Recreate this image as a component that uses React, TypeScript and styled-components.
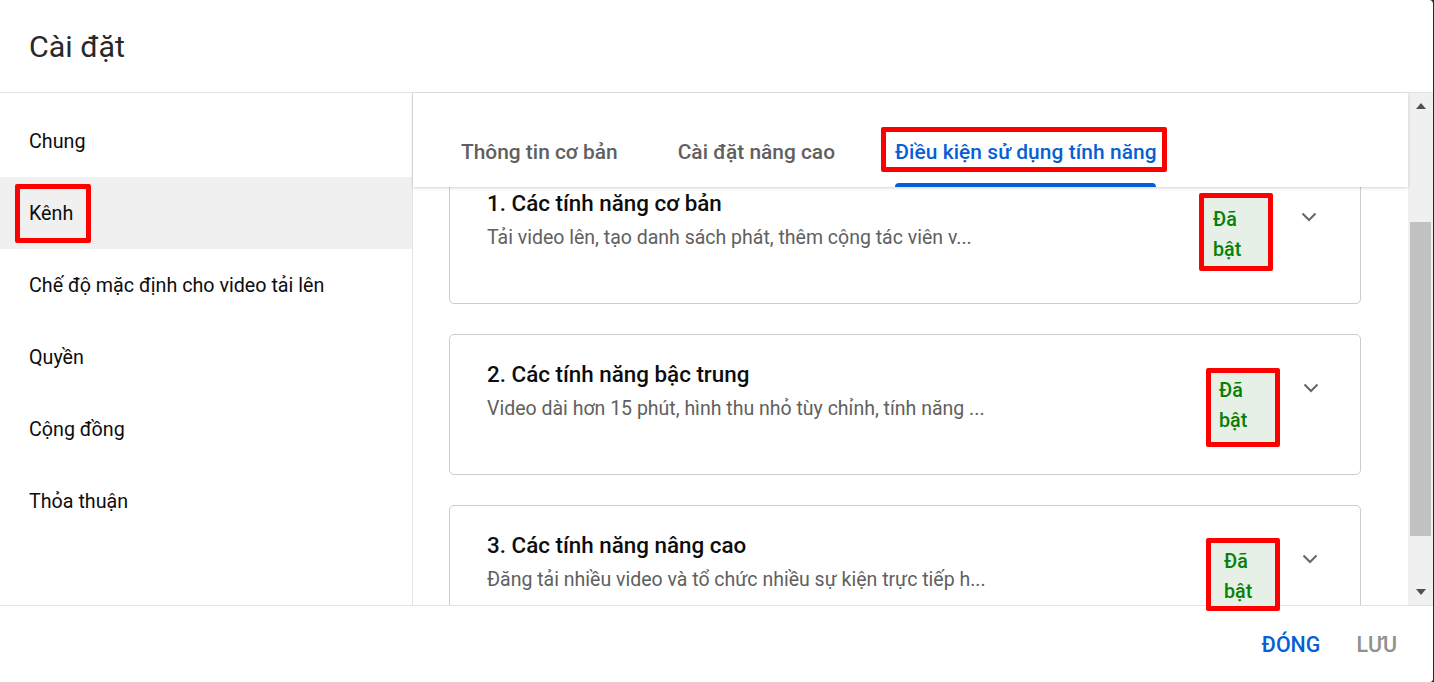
import React from "react"
import styled, { createGlobalStyle } from "styled-components"

const GlobalStyle = createGlobalStyle`
  html, body {
    margin: 0;
    height: 100%;
    background: #282828;
    overflow: hidden;
  }
  #root {
    height: 100%;
  }
`

const Dialog = styled.div`
  width: 1433px;
  height: 682px;
  background: #fff;
  border-radius: 0 4px 4px 0;
  display: flex;
  flex-direction: column;
  overflow: hidden;
  font-family: Roboto, "Noto Sans", sans-serif;
`

const Header = styled.div`
  height: 92px;
  flex: none;
  display: flex;
  align-items: center;
  padding-left: 29px;
  border-bottom: 1px solid #e2e2e2;
  font-size: 30.4px;
  color: #282828;
`

const Body = styled.div`
  flex: 1;
  min-height: 0;
  display: flex;
`

const Sidebar = styled.div`
  width: 413px;
  flex: none;
  box-sizing: border-box;
  padding-top: 12px;
  border-right: 1px solid #e2e2e2;
`

const NavItem = styled.div<{ $active?: boolean }>`
  height: 72px;
  display: flex;
  align-items: center;
  padding-left: 29px;
  font-size: 19.7px;
  color: #0d0d0d;
  background: ${(p) => (p.$active ? "#f0f0f0" : "transparent")};
`

const NavLabel = styled.span<{ $marked?: boolean }>`
  position: relative;
  ${(p) =>
    p.$marked &&
    `
    &::after {
      content: "";
      position: absolute;
      left: -14px;
      right: -18px;
      top: -18px;
      bottom: -18px;
      border: 5px solid #f00;
      border-radius: 2px;
    }
  `}
`

const Content = styled.div`
  flex: 1;
  min-width: 0;
  display: flex;
  flex-direction: column;
`

const TabBar = styled.div`
  position: relative;
  z-index: 1;
  height: 94px;
  flex: none;
  display: flex;
  gap: 60px;
  padding-left: 48px;
  background: #fff;
  box-shadow: 0 1px 3px rgba(0, 0, 0, 0.18);
`

const Tab = styled.div<{ $active?: boolean }>`
  position: relative;
  height: 94px;
  box-sizing: border-box;
  padding-top: 45px;
  font-size: 20.9px;
  font-weight: 500;
  line-height: 28px;
  white-space: nowrap;
  color: ${(p) => (p.$active ? "#065fd4" : "#606060")};
  ${(p) =>
    p.$active &&
    `
    letter-spacing: 0.08px;
    &::before {
      content: "";
      position: absolute;
      left: 0;
      right: 1px;
      bottom: 0;
      height: 4px;
      background: #065fd4;
      border-radius: 4px 4px 0 0;
    }
    &::after {
      content: "";
      position: absolute;
      left: -14px;
      right: -10px;
      top: 34px;
      height: 45px;
      box-sizing: border-box;
      border: 5px solid #f00;
      border-radius: 2px;
    }
  `}
`

const List = styled.div`
  display: flex;
  flex-direction: column;
  gap: 30px;
  margin: -24px 47px 0 36px;
`

const Card = styled.div`
  height: 141px;
  flex: none;
  box-sizing: border-box;
  display: flex;
  align-items: flex-start;
  padding-left: 37px;
  border: 1px solid #ccc;
  border-radius: 5px;
  background: #fff;
`

const CardText = styled.div`
  width: 640px;
  flex: none;
  padding-top: 25px;
`

const CardTitle = styled.div`
  font-size: 22.4px;
  font-weight: 500;
  line-height: 28px;
  color: #0d0d0d;
`

const CardDesc = styled.div`
  margin-top: 8px;
  font-size: 19.5px;
  line-height: 26px;
  color: #606060;
  white-space: nowrap;
`

const Badge = styled.div<{ $left: number; $top: number; $height: number; $pad: number; $padTop: number }>`
  position: relative;
  z-index: 2;
  flex: none;
  width: 74px;
  height: ${(p) => p.$height}px;
  box-sizing: border-box;
  margin-left: ${(p) => p.$left}px;
  margin-top: ${(p) => p.$top}px;
  padding-left: ${(p) => p.$pad}px;
  padding-top: ${(p) => p.$padTop}px;
  border: 5px solid #f00;
  border-radius: 2px;
  background: #e6f0e6;
  color: #078007;
  font-size: 19.7px;
  font-weight: 500;
  line-height: 30px;
`

const BadgeText = styled.span`
  display: block;
  width: min-content;
`

const ChevronBox = styled.div<{ $gap: number }>`
  flex: none;
  margin-left: ${(p) => p.$gap}px;
  margin-top: 45px;
  width: 18px;
  height: 14px;
  color: #666;
`

const Track = styled.div`
  width: 25px;
  flex: none;
  display: flex;
  flex-direction: column;
  align-items: center;
  background: #f0f0f0;
`

const ArrowUp = styled.div`
  margin-top: 10px;
  width: 0;
  height: 0;
  border-left: 5.5px solid transparent;
  border-right: 5.5px solid transparent;
  border-bottom: 6px solid #505050;
`

const ArrowDown = styled.div`
  margin-top: 53px;
  width: 0;
  height: 0;
  border-left: 5.5px solid transparent;
  border-right: 5.5px solid transparent;
  border-top: 6px solid #505050;
`

const Thumb = styled.div`
  width: 21px;
  height: 314px;
  margin-top: 113px;
  background: #c1c1c1;
`

const Footer = styled.div`
  position: relative;
  z-index: 1;
  height: 77px;
  flex: none;
  box-sizing: border-box;
  display: flex;
  justify-content: flex-end;
  align-items: center;
  gap: 36px;
  padding-right: 36px;
  border-top: 1px solid #e2e2e2;
  background: #fff;
`

const FooterButton = styled.div<{ $disabled?: boolean }>`
  font-size: 21.4px;
  font-weight: 500;
  color: ${(p) => (p.$disabled ? "#909090" : "#065fd4")};
`

const Chevron = () => (
  <svg width="18" height="14" viewBox="0 0 18 14" fill="none">
    <path d="M2.5 3.5 9 10l6.5-6.5" stroke="currentColor" strokeWidth="2" />
  </svg>
)

const navItems = ["Chung", "Kênh", "Chế độ mặc định cho video tải lên", "Quyền", "Cộng đồng", "Thỏa thuận"]

const cards = [
  {
    title: "1. Các tính năng cơ bản",
    desc: "Tải video lên, tạo danh sách phát, thêm cộng tác viên v...",
    left: 72,
    top: 29,
    height: 78,
    pad: 9,
    padTop: 7,
    gap: 27,
  },
  {
    title: "2. Các tính năng bậc trung",
    desc: "Video dài hơn 15 phút, hình thu nhỏ tùy chỉnh, tính năng ...",
    left: 79,
    top: 33,
    height: 79,
    pad: 8,
    padTop: 3,
    gap: 22,
  },
  {
    title: "3. Các tính năng nâng cao",
    desc: "Đăng tải nhiều video và tổ chức nhiều sự kiện trực tiếp h...",
    left: 79,
    top: 32,
    height: 73,
    pad: 13,
    padTop: 4,
    gap: 21,
  },
]

export default function App() {
  return (
    <Dialog>
      <GlobalStyle />
      <Header>Cài đặt</Header>
      <Body>
        <Sidebar>
          {navItems.map((item) => (
            <NavItem key={item} $active={item === "Kênh"}>
              <NavLabel $marked={item === "Kênh"}>{item}</NavLabel>
            </NavItem>
          ))}
        </Sidebar>
        <Content>
          <TabBar>
            <Tab>Thông tin cơ bản</Tab>
            <Tab>Cài đặt nâng cao</Tab>
            <Tab $active>Điều kiện sử dụng tính năng</Tab>
          </TabBar>
          <List>
            {cards.map((card) => (
              <Card key={card.title}>
                <CardText>
                  <CardTitle>{card.title}</CardTitle>
                  <CardDesc>{card.desc}</CardDesc>
                </CardText>
                <Badge
                  $left={card.left}
                  $top={card.top}
                  $height={card.height}
                  $pad={card.pad}
                  $padTop={card.padTop}
                >
                  <BadgeText>Đã bật</BadgeText>
                </Badge>
                <ChevronBox $gap={card.gap}>
                  <Chevron />
                </ChevronBox>
              </Card>
            ))}
          </List>
        </Content>
        <Track>
          <ArrowUp />
          <Thumb />
          <ArrowDown />
        </Track>
      </Body>
      <Footer>
        <FooterButton>ĐÓNG</FooterButton>
        <FooterButton $disabled>LƯU</FooterButton>
      </Footer>
    </Dialog>
  )
}
